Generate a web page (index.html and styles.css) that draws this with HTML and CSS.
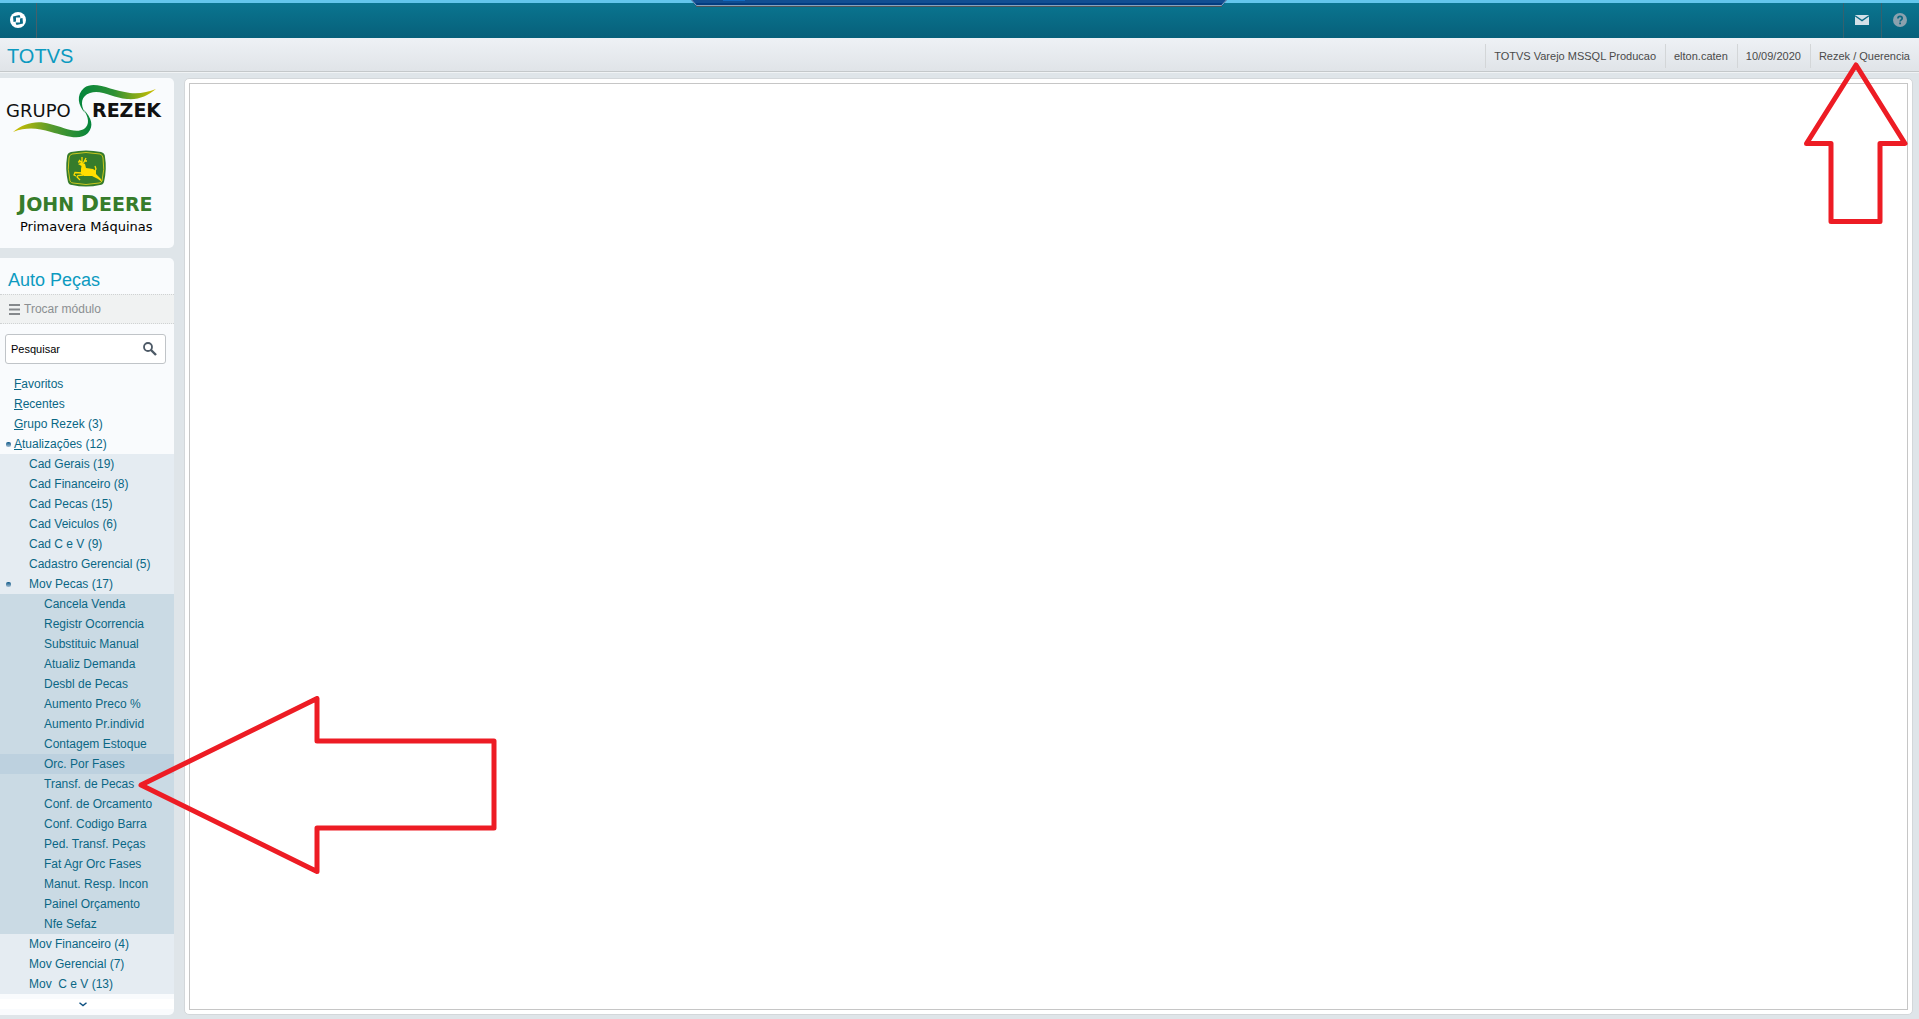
FILE: index.html
```html
<!doctype html>
<html lang="pt-BR">

<head>
    <meta charset="utf-8">
    <title>TOTVS</title>
    <link rel="stylesheet" href="styles.css">
</head>

<body>
<!--Remote session tab, sits over the header-->
<svg class="sessionTab" width="536" height="7" viewBox="0 0 536 7">
    <path d="M0 0 L5 6 H531 L536 0 Z" fill="#124e92"/>
    <path d="M4 3 H532 L530 5 H6 Z" fill="#043c80"/>
    <path d="M0.5 0 L5.5 5.5 H530.5 L535.5 0" fill="none" stroke="#8aa3bd"/>
    <path d="M5 6.5 H531" stroke="#4b5358"/>
    <path d="M32 0.5 H54" stroke="#1269bf"/>
</svg>

<!--Header bar-->
<header class="topBar">
    <button type="button" class="topButton brand" aria-label="TOTVS">
        <svg width="16" height="16" viewBox="0 0 16 16">
            <circle cx="8" cy="8" r="8" fill="#fff"/>
            <path d="M3 4.500 L9.500 3 L10.500 5.500 L6 5.500 L6 9.500 L3.500 10 Z" fill="#0a6c87"/>
            <path d="M13 11.500 L6.500 13 L5.500 10.500 L10 10.500 L10 6.500 L12.500 6 Z" fill="#0a6c87"/>
        </svg>
    </button>
    <div class="topActions">
        <button type="button" class="topButton" aria-label="Mensagens">
            <svg width="14" height="10" viewBox="0 0 14 10">
                <path d="M0 0 H14 V10 H0 Z" fill="#d3e0e8"/>
                <path d="M0 0.8 L7 5.6 L14 0.8" fill="none" stroke="#0b6a84" stroke-width="1.3"/>
            </svg>
        </button>
        <button type="button" class="topButton" aria-label="Ajuda">
            <svg width="14" height="14" viewBox="0 0 14 14">
                <circle cx="7" cy="7" r="7" fill="#8ba1ae"/>
                <path d="M4.9 5.4 C4.9 2.6 9.2 2.7 9.2 5.2 C9.2 6.8 7.1 6.8 7.1 8.6" fill="none" stroke="#0b6882" stroke-width="1.7"/>
                <path d="M6.2 9.6 H8 V11.3 H6.2 Z" fill="#0b6882"/>
            </svg>
        </button>
    </div>
</header>

<div class="infoBar">
    <h1>TOTVS</h1>
    <ul class="infoList">
        <li>TOTVS Varejo MSSQL Producao</li>
        <li>elton.caten</li>
        <li>10/09/2020</li>
        <li>Rezek / Querencia</li>
    </ul>
</div>

<div class="layout">
    <aside class="sidebar">
        <!--Company logos-->
        <div class="panel logos">
            <svg width="174" height="170" viewBox="0 0 174 170">
                <defs>
                    <linearGradient id="waveTop">
                        <stop offset="0" stop-color="#04853c"/>
                        <stop offset="0.45" stop-color="#2c9035"/>
                        <stop offset="1" stop-color="#d2c000"/>
                    </linearGradient>
                    <linearGradient id="waveBottom">
                        <stop offset="0" stop-color="#d2c000"/>
                        <stop offset="0.5" stop-color="#55992d"/>
                        <stop offset="1" stop-color="#04853c"/>
                    </linearGradient>
                </defs>
                <path d="M85 35 C78 27 76 17 84 10 C95 2 111 13 130 15 C140 16 148 14 156 11 C147 18 139 22 127 21 C113 20 101 11 90 15 C81 18 80 26 85 35 Z" fill="url(#waveTop)"/>
                <path d="M83 31 C92 40 94 48 88 55 C80 63 66 58 51 54 C37 50 27 49 13 54 C24 45 37 42 50 46 C63 49 75 56 84 51 C90 47 89 39 83 31 Z" fill="url(#waveBottom)"/>
                <text class="logoGroup" x="6" y="39">GRUPO</text>
                <text class="logoGroup strong" x="92" y="39">REZEK</text>
                <path d="M71 74 Q86 71 101 74 Q105 75 105 79 Q107 91 104 104 Q103 107 100 107 Q86 110 72 107 Q69 107 68 104 Q65 91 67 79 Q67 75 71 74 Z" fill="#367c2b"/>
                <path d="M72 76 Q86 73 100 76 Q103 77 103 80 Q105 91 102 103 Q101 105 99 105 Q86 108 73 105 Q71 105 70 103 Q67 91 69 80 Q69 77 72 76 Z" fill="none" stroke="#c9c71f"/>
                <path d="M78 86 L82 84.500 L85 86 L86 90 L93 91 L96 93 L96 96 L101 101 L102 104 L98 101 L92 98 L84 98 L81 96 L81 91 L81.500 88 Z" fill="#ffde00"/>
                <path d="M82 85 L79 82 M80.500 83.500 L78 84 M82 85 L82 79 M83.500 85 L86 80 M84.500 83 L87 83 M95 93 L96 91 L95 88 M82 95 L75 94.500 L74 97 L76 98 M83 97 L78 97.500 L77 99 L80 102" fill="none" stroke="#ffde00" stroke-width="1.3"/>
                <text class="logoDeere" x="18" y="133"><tspan class="cap">J</tspan>OHN <tspan class="cap">D</tspan>EERE</text>
                <text class="logoDealer" x="20" y="153">Primavera Máquinas</text>
            </svg>
        </div>

        <div class="panel menu">
            <h2>Auto Peças</h2>
            <button type="button" class="switchModule">
                <svg width="11" height="11" viewBox="0 0 11 11">
                    <path d="M0 1 H11 M0 5.5 H11 M0 10 H11" stroke="#85898c" stroke-width="2"/>
                </svg>
                Trocar módulo
            </button>
            <form class="search" onsubmit="return false">
                <input type="text" aria-label="Pesquisar" value="Pesquisar">
                <button type="submit" aria-label="Buscar">
                    <svg width="14" height="14" viewBox="0 0 14 14">
                        <circle cx="5" cy="5" r="4" fill="none" stroke="#4c5966" stroke-width="1.8"/>
                        <path d="M8 8 L13 13" stroke="#4c5966" stroke-width="2.4"/>
                    </svg>
                </button>
            </form>

            <!--Menu tree, three levels-->
            <nav>
                <ul class="level1">
                    <li><a href="#"><u>F</u>avoritos</a></li>
                    <li><a href="#"><u>R</u>ecentes</a></li>
                    <li><a href="#"><u>G</u>rupo Rezek (3)</a></li>
                    <li><a href="#" class="open"><u>A</u>tualizações (12)</a>
                        <ul class="level2">
                            <li><a href="#">Cad Gerais (19)</a></li>
                            <li><a href="#">Cad Financeiro (8)</a></li>
                            <li><a href="#">Cad Pecas (15)</a></li>
                            <li><a href="#">Cad Veiculos (6)</a></li>
                            <li><a href="#">Cad C e V (9)</a></li>
                            <li><a href="#">Cadastro Gerencial (5)</a></li>
                            <li><a href="#" class="open">Mov Pecas (17)</a>
                                <ul class="level3">
                                    <li><a href="#">Cancela Venda</a></li>
                                    <li><a href="#">Registr Ocorrencia</a></li>
                                    <li><a href="#">Substituic Manual</a></li>
                                    <li><a href="#">Atualiz Demanda</a></li>
                                    <li><a href="#">Desbl de Pecas</a></li>
                                    <li><a href="#">Aumento Preco %</a></li>
                                    <li><a href="#">Aumento Pr.individ</a></li>
                                    <li><a href="#">Contagem Estoque</a></li>
                                    <li><a href="#" class="selected">Orc. Por Fases</a></li>
                                    <li><a href="#">Transf. de Pecas</a></li>
                                    <li><a href="#">Conf. de Orcamento</a></li>
                                    <li><a href="#">Conf. Codigo Barra</a></li>
                                    <li><a href="#">Ped. Transf. Peças</a></li>
                                    <li><a href="#">Fat Agr Orc Fases</a></li>
                                    <li><a href="#">Manut. Resp. Incon</a></li>
                                    <li><a href="#">Painel Orçamento</a></li>
                                    <li><a href="#">Nfe Sefaz</a></li>
                                </ul>
                            </li>
                            <li><a href="#">Mov Financeiro (4)</a></li>
                            <li><a href="#">Mov Gerencial (7)</a></li>
                            <li><a href="#">Mov&nbsp; C e V (13)</a></li>
                        </ul>
                    </li>
                </ul>
            </nav>
            <button type="button" class="scrollDown" aria-label="Mais itens">
                <svg width="8" height="5" viewBox="0 0 8 5">
                    <path d="M0.5 0.8 L4 3.6 L7.5 0.8" fill="none" stroke="#0c4f80" stroke-width="1.4"/>
                </svg>
            </button>
        </div>
    </aside>

    <main class="content">
        <div class="workArea"></div>
    </main>
</div>

<!--Marker arrows drawn over the page-->
<svg class="marker markerLeft" width="360" height="180" viewBox="0 0 360 180">
    <path d="M4 89 L180 2.5 V45 H357 V132 H180 V175.5 Z"/>
</svg>
<svg class="marker markerUp" width="104" height="162" viewBox="0 0 104 162">
    <path d="M52 3 L101 81.5 H76 V159.5 H27 V81.5 H2.5 Z"/>
</svg>
</body>

</html>
```

FILE: styles.css
```css
*{box-sizing:border-box;}
body{margin:0; min-height:100vh; display:flex; flex-direction:column; position:relative; background-color:#dfe5e9; font-family:"Liberation Sans", Arial, sans-serif; font-size:12px; color:#4a4a4a;}
ul{list-style:none; margin:0; padding:0;}
button{border:0; padding:0; background:none; font-family:inherit; font-size:12px;}
svg{display:block;}

/*Header*/
.sessionTab{position:absolute; top:0; left:50%; margin-left:-269px;}
.topBar{display:flex; justify-content:space-between; height:38px; border-top:3px solid #63c6ec; background:linear-gradient(#0a7590, #07607a);}
.topActions{display:flex;}
.topButton{width:37px; padding-bottom:2px; display:flex; align-items:center; justify-content:center; border-right:1px solid #46606a;}
.topActions .topButton{width:38px; padding-right:1px; border-right:0; border-left:1px solid #35616e;}
.infoBar{display:flex; justify-content:space-between; align-items:center; height:34px; padding:2px 0 0 7px; background:linear-gradient(#eef1f5, #e0e4e8); border-bottom:1px solid #c4c8ca;}
.infoBar h1{margin:0; font-size:20px; line-height:24px; font-weight:normal; color:#0c9ac0;}
.infoList{display:flex; font-size:11px;}
.infoList li{padding:0 9px 0 8px; line-height:24px; border-left:1px solid #d3d6d8;}

/*Sidebar*/
.layout{display:flex; flex:1; gap:10px; padding:5px 6px 4px 0; border-top:1px solid #f0f3f5;}
.sidebar{width:174px; display:flex; flex-direction:column; gap:10px;}
.panel{background-color:#f9fbfd; border-radius:0 5px 5px 0;}
.logoGroup{font-family:"DejaVu Sans", sans-serif; font-size:18px; fill:#111;}
.logoGroup.strong{font-weight:bold; font-size:19px;}
.logoDeere{font-family:"DejaVu Sans", sans-serif; font-size:19px; font-weight:bold; fill:#367c2b;}
.logoDeere .cap{font-size:22px;}
.logoDealer{font-family:"DejaVu Sans", sans-serif; font-size:13px; fill:#000;}
.menu{flex:1; display:flex; flex-direction:column;}
.menu h2{margin:0; padding:8px 8px 0; height:36px; line-height:28px; font-size:18px; font-weight:normal; color:#0c9ac0;}
.switchModule{display:flex; align-items:center; gap:4px; height:30px; padding:0 9px; color:#8b8f91; background-color:#f0f2f2; border-top:1px dotted #cfd2d3; border-bottom:1px dotted #cfd2d3;}
.search{display:flex; align-items:center; height:30px; margin:10px 8px 10px 5px; padding-right:8px; background-color:#fff; border:1px solid #c0c4c8; border-radius:3px;}
.search input{flex:1; min-width:0; border:0; outline:0; padding:0 5px; background:none; font-family:inherit; font-size:11px; color:#000;}

/*Menu tree*/
.menu a{display:block; position:relative; line-height:20px; padding-left:14px; color:#0a6785; text-decoration:none; white-space:nowrap;}
.level2{background-color:#e5ecf2;}
.menu .level2 a{padding-left:29px;}
.level3{background-color:#cadae4;}
.menu .level3 a{padding-left:44px;}
.menu .level3 .selected{background-color:#bdd1df;}
.open::before{content:""; position:absolute; left:6px; top:8px; width:5px; height:5px; border-radius:2px; background:linear-gradient(#0c5787, #a5bfd3);}
.scrollDown{display:flex; align-items:center; justify-content:center; height:10px; margin:5px 0 0; padding-right:9px; background-color:#fff;}

/*Content*/
.content{flex:1; display:flex; padding:4px; background-color:#fff; border:1px solid #d3d7da; border-radius:5px;}
.workArea{flex:1; border:1px solid #c6c6c6;}

/*Marker arrows*/
.marker{position:absolute; fill:none; stroke:#ed1c24; stroke-width:5; stroke-linejoin:round; pointer-events:none;}
.markerLeft{left:137px; top:696px;}
.markerUp{right:11px; top:62px;}
```
